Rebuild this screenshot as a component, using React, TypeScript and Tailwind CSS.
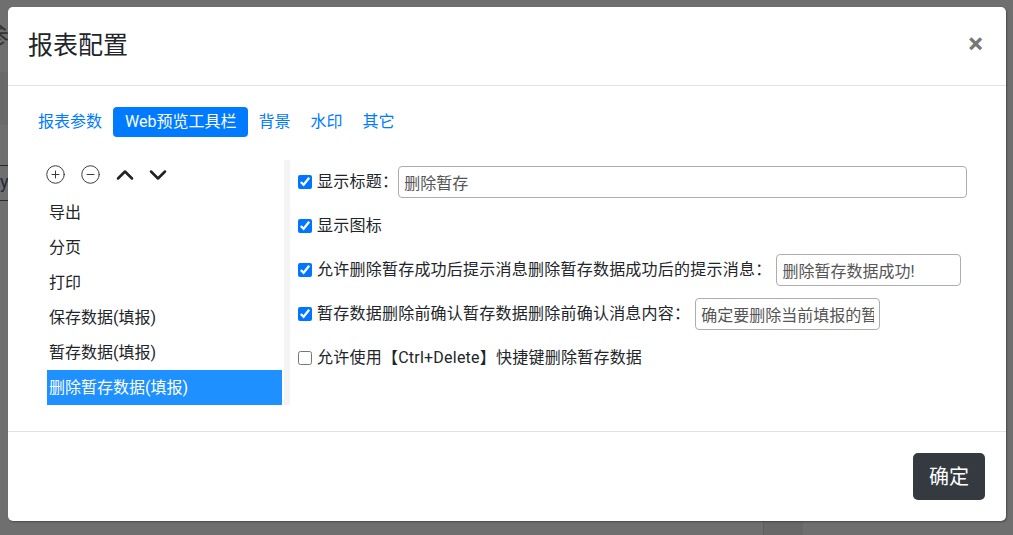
import React from 'react';
import { CirclePlus, CircleMinus, ChevronUp, ChevronDown } from 'lucide-react';

const tabs = ['报表参数', 'Web预览工具栏', '背景', '水印', '其它'];
const items = ['导出', '分页', '打印', '保存数据(填报)', '暂存数据(填报)', '删除暂存数据(填报)'];

interface OptionRowProps {
    checked: boolean;
    label: string;
    value?: string;
    inputClass?: string;
}

const OptionRow: React.FC<OptionRowProps> = ({ checked, label, value, inputClass }) => {
    return (
        <div className="h-[32px] flex items-center">
            <input
                type="checkbox"
                defaultChecked={checked}
                className="w-[14px] h-[14px] m-0 shrink-0 accent-[#0075ff]"
            />
            <span className="ml-[5px] text-[16px] tracking-[0.23px] text-[#212529] whitespace-nowrap">{label}</span>
            {value !== undefined && (
                <input
                    type="text"
                    defaultValue={value}
                    className={`h-[32px] px-[5px] border border-[#adadad] rounded-[4px] text-[16px] text-[#555] outline-none ${inputClass}`}
                />
            )}
        </div>
    );
};

export default function App() {
    return (
        <div className="relative w-[1013px] h-[535px] overflow-hidden bg-[#6f6f6f] font-['Roboto','Noto_Sans_CJK_SC',sans-serif]">
            {/* page behind the backdrop */}
            <div className="flex flex-col h-full">
                <div className="h-[72px] pt-[20px] -ml-[17px] text-[26px] leading-[34px] text-[#333]">参</div>
                <div className="h-[53px] w-[400px] bg-[#6a6a6a]" />
                <div className="mt-[40px] h-[36px] w-[400px] border-y border-[#2a2a2a] text-[18px] leading-[32px] text-[#1f2a3a]">y</div>
                <div className="flex-1" />
                <div className="h-[14px] flex">
                    <div className="ml-[763px] w-[40px] bg-[#686868] border-l border-[#5e5e5e]" />
                </div>
            </div>

            {/* modal */}
            <div className="absolute left-[8px] top-[7px] w-[998px] h-[514px] bg-white rounded-[5px] shadow-[1px_1px_2px_rgba(0,0,0,0.35)] flex flex-col">
                <div className="h-[79px] border-b border-[#e2e2e2] flex items-center justify-between pl-[20px] pr-[23px]">
                    <h5 className="text-[25px] text-[#212529] leading-none -mt-[2px]">报表配置</h5>
                    <span className="text-[28px] font-bold text-[#777] leading-none -mt-[4px]">×</span>
                </div>

                <div className="flex-1 border-b border-[#e2e2e2] pt-[21px] pl-[20px] pr-[20px]">
                    <div className="flex items-center">
                        {tabs.map((t, i) => (
                            <span
                                key={t}
                                className={`h-[30px] flex items-center text-[16px] rounded-[4px] ${i === 1 ? 'bg-[#007bff] text-white px-[12px] ml-[1px]' : 'text-[#007bff] px-[10px]'}`}
                            >
                                {t}
                            </span>
                        ))}
                    </div>

                    <div className="flex mt-[22px] ml-[19px]">
                        <div className="w-[237px]">
                            <div className="h-[36px] flex items-center gap-[14px] pb-[5px] text-[#333]">
                                <CirclePlus size={21} strokeWidth={1.1} className="-ml-[2px]" />
                                <CircleMinus size={21} strokeWidth={1.1} />
                                <ChevronUp size={28} strokeWidth={2.2} className="text-[#222] -ml-[4px]" />
                                <ChevronDown size={28} strokeWidth={2.2} className="text-[#222] -ml-[9px]" />
                            </div>
                            {items.map((it, i) => (
                                <div
                                    key={it}
                                    className={`h-[35px] w-[235px] flex items-center pl-[2px] text-[16px] ${i === items.length - 1 ? 'bg-[#1e90ff] text-white' : 'text-[#212529]'}`}
                                >
                                    {it}
                                </div>
                            ))}
                        </div>
                        <div className="w-[6px] bg-[#f4f4f4] mt-[1px] h-[245px]" />
                        <div className="flex-1 pl-[8px] pt-[7px] flex flex-col gap-[12px]">
                            <OptionRow checked label="显示标题：" value="删除暂存" inputClass="w-[569px]" />
                            <OptionRow checked label="显示图标" />
                            <OptionRow checked label="允许删除暂存成功后提示消息删除暂存数据成功后的提示消息：" value="删除暂存数据成功!" inputClass="w-[185px] ml-[5px]" />
                            <OptionRow checked label="暂存数据删除前确认暂存数据删除前确认消息内容：" value="确定要删除当前填报的暂存数据吗？" inputClass="w-[185px] ml-[5px]" />
                            <OptionRow checked={false} label="允许使用【Ctrl+Delete】快捷键删除暂存数据" />
                        </div>
                    </div>
                </div>

                <div className="h-[89px] flex items-center justify-end pr-[21px]">
                    <button className="h-[47px] px-[16px] rounded-[5px] bg-[#343a40] text-white text-[20px]">确定</button>
                </div>
            </div>
        </div>
    );
}
